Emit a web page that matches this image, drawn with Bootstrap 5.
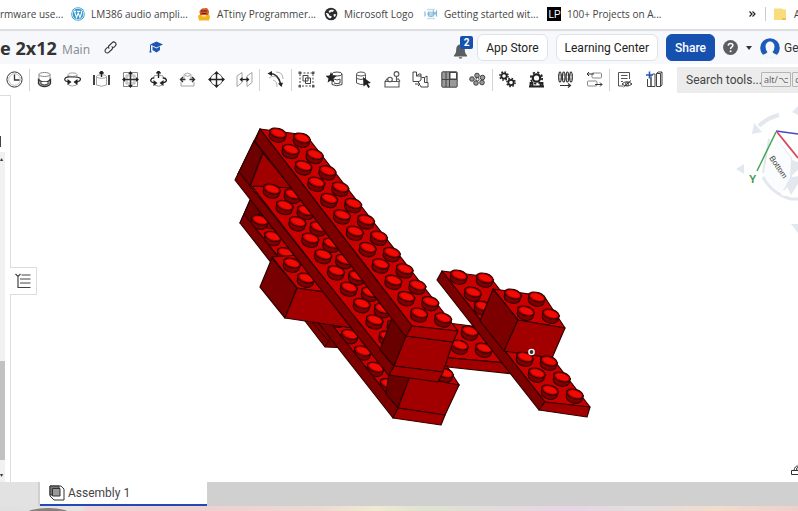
<!DOCTYPE html>
<html lang="en">
<head>
<meta charset="utf-8">
<meta name="viewport" content="width=device-width, initial-scale=1">
<title>Plate 2x12 Assembly</title>
<link rel="stylesheet" href="https://cdn.jsdelivr.net/npm/bootstrap@5.3.0/dist/css/bootstrap.min.css">
<style>
body{font-family:Roboto,"Noto Sans",sans-serif;font-size:12px;color:#333;background:#fff}
a{color:inherit;text-decoration:none}
.bookmarks{height:31px;border-bottom:2px solid #dcdfe2;font-family:"Open Sans","Noto Sans",sans-serif;font-size:10px;color:#444;padding-bottom:1px}
.bookmarks a{gap:6px}
.bm-grid{display:grid;grid-template-columns:71px 126px 127px 100px 123px 1fr}
.bm-grid svg,.bm-more svg{width:14px;height:14px;flex:none}
.bm-more{width:49px;gap:8px}
.bm-more>*{flex:none}
.bm-more svg.chev{width:8px}
.bm-more .bar{width:1px;height:14px;background:#ccc}
.docbar{height:33px;background:#f6f8fb}
.doc-title{font-family:"Noto Sans",sans-serif;font-size:18px;font-weight:700;line-height:24px;width:62px}
.doc-space{font-family:"Noto Sans",sans-serif;color:#8b8f94;font-size:12px;width:42px;padding-top:4px}
.docbar .btn{font-size:12px;line-height:16px;height:27px;color:#222;padding:4px 8px}
.docbar .btn-plain{background:#fff;border:1px solid #dfe3e8}
.docbar .btn-share{background:#1651b0;color:#fff;border-color:#1651b0;width:49px;padding:4px 0;font-weight:500}
.icon-btn{background:none;border:0;padding:0;color:#333;line-height:1;display:flex;align-items:center;justify-content:center}
.bell{width:24px;height:27px;margin-right:1px}
.bell .count{position:absolute;top:2px;right:3px;width:13px;height:13px;font-size:10px;line-height:13px;background:#1651b0;color:#fff;border-radius:2px;font-weight:700}
.user-zone{width:83px;padding-left:8px}
.toolbar{height:31px}
.tgroup{height:22px;border-right:1px solid #d4d4d4}
.tgroup .icon-btn{flex:1 1 0}
.tgroup svg{width:17px;height:17px}
.g1{width:30px}.g8{width:230px}.g1b{width:32px}.g7{width:201px}.g4{width:117px}.g2{width:59px;border:0}
.search{background:#ececec;height:26px;margin-left:8px;padding-left:9px}
.search>*{flex:none}
.search input{border:0;background:none;padding:0;width:75px;font-size:12px;color:#444;outline:0}
.search input::placeholder{color:#444;opacity:1}
.search kbd{font-family:"Noto Sans","DejaVu Sans",sans-serif;font-size:9px;line-height:13px;background:none;color:#666;border:1px solid #b5b5b5;border-radius:1px;padding:0 2px;margin-right:1px}
.side{width:11px;border-right:1px solid #dcdcdc;border-top:1px solid #dcdcdc}
.side .track{width:5px;background:#f1f1f1;margin-top:56px;font-size:6px;line-height:14px}
.side .thumb{height:99px;background:#c1c1c1;margin-bottom:8px}
.side .grip{position:absolute;left:0;top:40px;width:1px;height:11px;background:#444}
.tree-btn{position:absolute;left:-1px;top:172px;width:27px;height:28px;border:1px solid #dcdcdc;border-left:0;background:#fff}
.model{position:absolute;left:-11px;top:0;width:798px;height:388px}
.cube{position:absolute;right:0;top:0;width:78px;height:146px}
.corner{position:absolute;right:0;bottom:6px;width:8px;height:12px}
.tabs{height:24px;background:#d0d0d0}
.tabs .lead-in{width:40px;background:#e2e2e2;border-right:2px solid #d0d0d0}
.tabs .tab-on{width:167px;background:#fff;border-bottom:2px solid #2448b4;padding-left:9px;gap:3px;font-size:12px;color:#444}
.strip{height:5px;background:linear-gradient(90deg,#dfe0df 0,#e4e4e2 10%,#f0d3d6 11%,#efcfd0 25%,#efd9d2 40%,#f0ead0 47%,#dfe3cf 53%,#e8d4e6 71%,#e3dedd 80%,#f3dccb 90%,#efcfcc 100%)}
</style>
</head>
<body>
<div class="d-flex flex-column vh-100 overflow-hidden text-nowrap">

<nav class="bookmarks d-flex align-items-center overflow-hidden flex-shrink-0" aria-label="Bookmarks">
  <div class="bm-grid flex-grow-1">
    <a href="#">rmware use...</a>
    <a href="#" class="d-flex align-items-center"><svg viewBox="0 0 14 14"><circle cx="7" cy="7" r="6.800" fill="#3499cd"/><circle cx="7" cy="7" r="5.700" fill="none" stroke="#fff" stroke-width=".7"/><path d="M2.700 4.400h2.500M6 4.400h3M3.400 4.500l2.200 6 1.600-4.600L8.900 10.500l1.700-4.500q.2-1.200-.7-2" fill="none" stroke="#fff" stroke-width="1.100"/></svg>LM386 audio ampli...</a>
    <a href="#" class="d-flex align-items-center"><svg viewBox="0 0 14 14"><path d="M1 9q1-2 3-1h6q3-1 3 2l-1 3.500H2z" fill="#f2b51e"/><path d="M3 8L2.500 4 5 1.500l5-.5 2 3-.5 4z" fill="#d8572a"/><path d="M4 4h6M4.500 6.500h5" stroke="#542b1a" stroke-width="1.200"/><path d="M5 8h4v1.500H5z" fill="#ffe6a5"/></svg>ATtiny Programmer...</a>
    <a href="#" class="d-flex align-items-center"><svg viewBox="0 0 14 14"><circle cx="7" cy="7" r="6.300" fill="#2b2d2f"/><path d="M2 6q2.500-.5 3 1.500T7.500 9Q8 11 6 11.500 3 10.500 2 6zM6 3q3-.8 4 .5L8.500 5 7 4.500 6 6 4.500 4.500zM9.500 7.500q1.500-1 2.500 0-.3 2-2 2.500z" fill="#fff"/></svg>Microsoft Logo</a>
    <a href="#" class="d-flex align-items-center"><svg viewBox="0 0 14 14"><path d="M3 2.500h8M3 11.500h8" stroke="#c8dde9" stroke-width="1.500"/><path d="M1 4.500v5M3 7h1.500V4.500v5M6 4.500v5h2v-5M9.500 9.500v-5L11 7l1.500-2.500v5" fill="none" stroke="#83b9d8" stroke-width="1.200"/></svg>Getting started wit...</a>
    <a href="#" class="d-flex align-items-center"><svg viewBox="0 0 14 14"><rect width="14" height="14" fill="#000"/><text x="1.500" y="11" font-size="10" font-family="Liberation Sans" fill="#fff">LP</text></svg>100+ Projects on A...</a>
  </div>
  <div class="bm-more d-flex align-items-center flex-shrink-0">
    <a href="#" class="d-flex" aria-label="More"><svg class="chev" viewBox="0 0 8 14"><path d="M.5 4.500L3 7 .5 9.500M3.500 4.500L6 7 3.500 9.500" fill="none" stroke="#222" stroke-width="1.200"/></svg></a>
    <span class="bar"></span>
    <a href="#" class="d-flex align-items-center"><svg viewBox="0 0 14 14"><path d="M0 1.500h8l1 1h3V13H0z" fill="#f9dc7b"/><path d="M8 11h4v2H8z" fill="#efc14c"/></svg>A</a>
  </div>
</nav>

<header class="docbar d-flex align-items-center overflow-hidden flex-shrink-0">
  <h1 class="doc-title mb-0 flex-shrink-0">e 2x12</h1>
  <span class="doc-space">Main</span>
  <button class="icon-btn" aria-label="Link"><svg width="13" height="13" viewBox="0 0 13 13" fill="none" stroke="#333" stroke-width="1.100"><path d="M5.300 7.700C4 6.500 4.400 5.300 5.200 4.500L8 1.800c1-1 2.400-1 3.300-.1s.9 2.300 0 3.200L9.300 6.800M7.700 5.300c1.300 1.200.9 2.400.1 3.200L5 11.200c-1 1-2.400 1-3.300.1s-.9-2.300 0-3.200L3.700 6.200"/></svg></button>
  <button class="icon-btn ms-4 ps-2" aria-label="Education"><svg width="14" height="13" viewBox="0 0 14 13" fill="#1f55b5"><path d="M7.500.5L14 3.500 7.500 6.500 1 3.500zM3.500 5.500l4 2 3.500-2v3.500l-3.500 2.500-4-2.500zM1 4h1v5l.6 2.500H.3L1 9z"/></svg></button>
  <div class="flex-grow-1"></div>
  <button class="icon-btn bell position-relative" aria-label="Notifications, 2 new"><svg class="mt-2 me-2" width="15" height="17" viewBox="0 0 15 16" fill="#5a5d61"><path d="M7.500 1c3 0 4.300 2 4.300 5 0 3 .7 4.300 2.200 5.800V13H1v-1.200C2.500 10.300 3.200 9 3.200 6c0-3 1.300-5 4.300-5zM5.500 13.800h4q-2 3-4 0z"/></svg><span class="count">2</span></button>
  <button class="btn btn-plain">App Store</button>
  <button class="btn btn-plain ms-2">Learning Center</button>
  <button class="btn btn-share ms-2">Share</button>
  <div class="user-zone d-flex align-items-center flex-shrink-0">
    <button class="icon-btn" aria-label="Help"><svg width="15" height="15" viewBox="0 0 15 15"><circle cx="7.500" cy="7.500" r="7.400" fill="#5c5e61"/><path d="M5.200 5.600Q5.400 3.500 7.600 3.500T9.900 5.500C9.900 7 7.600 7 7.600 9" fill="none" stroke="#fff" stroke-width="1.500"/><circle cx="7.600" cy="11.200" r="1" fill="#fff"/></svg><svg class="ms-2" width="6" height="4" viewBox="0 0 6 4"><path d="M0 0h6L3 4z" fill="#333"/></svg></button>
    <a href="#" class="d-flex align-items-center ms-2"><svg class="me-1" width="20" height="20" viewBox="0 0 20 20"><circle cx="10" cy="10" r="9.800" fill="#1d5bb8"/><path d="M5.500 8.500a4.500 5 0 0 1 9 0q0 3.500-2 5.500l1.500 1.500 3.500 1.500Q15 20 10 20t-7.500-3L6 15.500 7.500 14q-2-2-2-5.500z" fill="#f6f8fb"/></svg>Ge</a>
  </div>
</header>

<div class="toolbar d-flex align-items-center overflow-hidden flex-shrink-0" role="toolbar" aria-label="Assembly tools">
  <div class="tgroup g1 d-flex flex-shrink-0"><button class="icon-btn" aria-label="History"><svg viewBox="0 0 17 17" fill="none" stroke="#333" stroke-width="1"><circle cx="8.500" cy="8.500" r="7.600"/><circle cx="8.500" cy="8.500" r="5.800" stroke="#999" stroke-width=".6"/><path d="M8.500 3.500v5.500h5" stroke-width="1.300"/></svg></button></div>
  <div class="tgroup g8 d-flex flex-shrink-0">
    <button class="icon-btn" aria-label="Fastened mate"><svg viewBox="0 0 17 17" fill="none" stroke="#777" stroke-width=".9"><path d="M3 3.500v6M14 3.500v6"/><ellipse cx="8.500" cy="3.500" rx="5.500" ry="2" fill="#fff"/><path d="M2.500 8.500v4q1.500 3 6 3t6-3v-4l-2 1.500q-4 2-8 0z" fill="#aaa" stroke="#333" stroke-width="1.300"/><path d="M5 11v2q3.500 1.800 7 0v-2" fill="#fff" stroke="#333"/></svg></button>
    <button class="icon-btn" aria-label="Revolute mate"><svg viewBox="0 0 17 17" fill="none" stroke="#999" stroke-width=".9"><path d="M4 4v3M13 4v3M4.500 12v2q4 2 8 0v-2"/><ellipse cx="8.500" cy="3.700" rx="4.500" ry="1.800"/><path d="M6 11Q0 10.500.8 8T6 6h5q6 .3 5.400 2.500T11 11" stroke="#333" stroke-width="1.200"/><path d="M3.500 8L7.500 11l-4 3zM13.500 8l-4 3 4 3z" fill="#222" stroke="none"/></svg></button>
    <button class="icon-btn" aria-label="Slider mate"><svg viewBox="0 0 17 17" fill="none" stroke="#999" stroke-width=".9"><path d="M3.500 5.500v8.500q5 2.500 10 0V5.500"/><ellipse cx="8.500" cy="5.500" rx="5" ry="1.800"/><path d="M1 4v10M16 4v10" stroke="#222" stroke-width="1.700"/><path d="M8.500 0v6M6.500 2.500L8.500 0l2 2.500" stroke="#222" stroke-width="1.400"/></svg></button>
    <button class="icon-btn" aria-label="Planar mate"><svg viewBox="0 0 17 17" fill="none" stroke="#333" stroke-width=".9"><path d="M1.500 1.500h14v14h-14z" stroke="#777"/><path d="M3 5h11M3 12h11M5 3v11M12 3v11" stroke="#aaa"/><path d="M1 8.500h15M8.500 1v15" stroke-width="1.500"/><path d="M8.500 0L11 3.200H6zM8.500 17L6 13.800h5zM0 8.500L3.200 6v5zM17 8.500L13.800 11V6z" fill="#222" stroke="none"/></svg></button>
    <button class="icon-btn" aria-label="Cylindrical mate"><svg viewBox="0 0 17 17" fill="none" stroke="#888" stroke-width=".9"><path d="M4 5v3M13 5v3M4.500 13v1q4 2.500 8 0v-1M4 5q4.500-2 9 0"/><path d="M6 12Q0 11.500.8 9T4 7M11 12q6-.8 5.400-3T13 7" stroke="#222" stroke-width="1.300"/><path d="M3.500 9L7.500 12l-4 3zM13.500 9l-4 3 4 3z" fill="#222" stroke="none"/><path d="M8.500 0v7M6.500 2.500L8.500 0l2 2.500" stroke="#222" stroke-width="1.400"/></svg></button>
    <button class="icon-btn" aria-label="Pin slot mate"><svg viewBox="0 0 17 17" fill="none" stroke="#999" stroke-width=".9"><path d="M5 8V3.500Q8.500.5 12 3.500V8M2 11v4h13v-4"/><path d="M6 4.500q2.500 1.500 5 0"/><path d="M1.500 8.500h5M10.500 8.500h5M4 6L1.500 8.500 4 11M13 6l2.500 2.500L13 11" stroke="#333" stroke-width="1.400"/></svg></button>
    <button class="icon-btn" aria-label="Ball mate"><svg viewBox="0 0 17 17" fill="none" stroke="#444" stroke-width=".9"><circle cx="8.500" cy="8.500" r="6"/><path d="M1 8.500h15M8.500 1v15" stroke="#222" stroke-width="1.400"/><path d="M8.500 0l2.500 3h-5zM8.500 17l-2.500-3h5zM0 8.500l3-2.500v5zM17 8.500l-3 2.500v-5z" fill="#222" stroke="none"/></svg></button>
    <button class="icon-btn" aria-label="Parallel mate"><svg viewBox="0 0 17 17" fill="none" stroke="#999" stroke-width=".9"><path d="M1 5l5-3.500v10L1 15.500zM11 5l5-3.500v10l-5 4z"/><path d="M4.500 8.500h8" stroke="#222" stroke-width="1.300"/><path d="M3.500 8.500l3-2.500v5zM13.500 8.500l-3 2.500v-5z" fill="#222" stroke="none"/></svg></button>
  </div>
  <div class="tgroup g1b d-flex flex-shrink-0"><button class="icon-btn" aria-label="Tangent mate"><svg viewBox="0 0 17 17" fill="none" stroke="#aaa" stroke-width=".9"><path d="M2 7q6-4 9 1t3 7M6 9q4 1 4 7M9 1q7 0 7 7"/><path d="M3 2.500q8 0 10.500 10" stroke="#222" stroke-width="1.400"/><path d="M.5 2.500L5 0v5zM14.500 16l-3.500-3.500 5-1z" fill="#222" stroke="none"/></svg></button></div>
  <div class="tgroup g7 d-flex flex-shrink-0">
    <button class="icon-btn" aria-label="Group"><svg viewBox="0 0 17 17" fill="none" stroke="#444"><path d="M2 2h13v13H2z" stroke-dasharray="2 1.500"/><path d="M.5.500h2.500v2.500H.5zM14 .5h2.500v2.500H14zM.5 14h2.500v2.500H.5zM14 14h2.500v2.500H14z" fill="#555" stroke="none"/><path d="M5 4.500h5v5.500H5zM7.500 7h5v5.500h-5z" fill="#fff"/></svg></button>
    <button class="icon-btn" aria-label="Mate connector"><svg viewBox="0 0 17 17" fill="none" stroke="#444" stroke-width="1"><path d="M6 3v10.500q4.500 2.500 10 0V3"/><ellipse cx="11" cy="3" rx="5" ry="2" fill="#fff"/><path d="M8 8q3 2 6 0v4q-3 1.500-6 0"/><path d="M5 1l1.500 3.500 4 .4-3 2.500.9 4L5 9.400 1.600 11.400l.9-4L-.5 4.900l4-.4z" fill="#222" stroke="none"/></svg></button>
    <button class="icon-btn" aria-label="Select part"><svg viewBox="0 0 17 17" fill="none" stroke="#555" stroke-width="1"><path d="M1.500 3v9q4 2.500 9 1V3"/><ellipse cx="6" cy="3" rx="4.500" ry="2" fill="#fff"/><path d="M1.500 7.500q4.500 2 9 0"/><path d="M8 6l8 6-3.200.5L15 16l-1.700 1-2.100-3.500L8.500 15.500z" fill="#222" stroke="none"/></svg></button>
    <button class="icon-btn" aria-label="Replicate"><svg viewBox="0 0 17 17" fill="none" stroke="#555" stroke-width="1.100"><path d="M1 10.500h14V16H1zM1 10.500L3 8h2M12 8h2.500l1.500 2.500"/><circle cx="6" cy="8.500" r="2.300" fill="#fff"/><circle cx="12.500" cy="3" r="2.400"/><path d="M12.500 5.500V11"/></svg></button>
    <button class="icon-btn" aria-label="Snap"><svg viewBox="0 0 17 17" fill="none" stroke="#444" stroke-width="1"><path d="M1 1h3.500v4H9v4L7 10.500H1zM9.500 6.500h3v5H16V16H9l-1-2"/><path d="M4.500 5L7 3h2v2M12.500 6.500L15 5v6.500"/><path d="M3 13h5M6 11l2 2-2 2"/></svg></button>
    <button class="icon-btn" aria-label="Pattern"><svg viewBox="0 0 17 17" stroke="#444" stroke-width="1"><rect x=".8" y=".8" width="15.400" height="15.400" rx="1" fill="#999"/><path d="M9 1.500h6.500V8H9z" fill="#fff"/><path d="M8.500 1v15M1 8.500h15M5 1v15" fill="none"/></svg></button>
    <button class="icon-btn" aria-label="Circular pattern"><svg viewBox="0 0 17 17" fill="#999" stroke="#333" stroke-width=".9"><circle cx="3" cy="8" r="2.300"/><circle cx="8" cy="4.500" r="2.300"/><circle cx="13.500" cy="6.500" r="2.300"/><circle cx="13" cy="11.500" r="2.300"/><circle cx="7" cy="12" r="2.300"/><circle cx="8.500" cy="8.300" r="1.600" fill="#fff"/></svg></button>
  </div>
  <div class="tgroup g4 d-flex flex-shrink-0">
    <button class="icon-btn" aria-label="Gear relation"><svg viewBox="0 0 17 17" fill="none" stroke="#222"><circle cx="5" cy="5" r="2.700" stroke-width="1.800"/><circle cx="5" cy="5" r="4.100" stroke-width="1.500" stroke-dasharray="1.600 1.620"/><circle cx="12" cy="11.500" r="2.700" stroke-width="1.800"/><circle cx="12" cy="11.500" r="4.100" stroke-width="1.500" stroke-dasharray="1.600 1.620"/></svg></button>
    <button class="icon-btn" aria-label="Rack and pinion"><svg viewBox="0 0 17 17" fill="none" stroke="#222"><circle cx="8.500" cy="7" r="3.700" stroke-width="2.200"/><circle cx="8.500" cy="7" r="5.700" stroke-width="1.800" stroke-dasharray="2.200 2.277"/><path d="M1 15.500h15M2.500 15.500v-3.500h2v3M14.500 15.500v-3.500h-2v3" stroke-width="1.800"/></svg></button>
    <button class="icon-btn" aria-label="Screw relation"><svg viewBox="0 0 17 17" fill="none" stroke="#333" stroke-width="1.200"><path d="M1 4h15M1 8h15" stroke="#888" stroke-width=".8"/><ellipse cx="3" cy="6" rx="1.300" ry="5"/><ellipse cx="6.700" cy="6" rx="1.300" ry="5"/><ellipse cx="10.400" cy="6" rx="1.300" ry="5"/><ellipse cx="14" cy="6" rx="1.300" ry="5"/><path d="M3 14.500h10M11 12.500l2.500 2-2.500 2"/></svg></button>
    <button class="icon-btn" aria-label="Linear relation"><svg viewBox="0 0 17 17" fill="none" stroke="#888" stroke-width="1"><rect x="6" y="2" width="9.500" height="5" rx="1"/><rect x="1.500" y="10" width="9.500" height="5" rx="1"/><path d="M1 3h7M3 1L1 3l2 2M9 13.500h7M14 11.500l2 2-2 2" stroke="#333"/></svg></button>
  </div>
  <div class="tgroup g2 d-flex flex-shrink-0">
    <button class="icon-btn" aria-label="Display states"><svg viewBox="0 0 17 17" fill="none" stroke="#555" stroke-width="1"><path d="M7 15H2.500V1.500h11V8M5 4.500h6.500M5 7.500h6.500M5 10.500h2"/><path d="M6 13q4.500-4.500 10 0-5 4-10 0zM7.500 16l7.500-6.500" stroke="#333"/><circle cx="11" cy="13" r="1.500"/></svg></button>
    <button class="icon-btn" aria-label="Insert"><svg viewBox="0 0 17 17" fill="none" stroke="#444" stroke-width="1"><path d="M1.500 8v7.500h3.500V6.500M5 15.500V4.500L6.500 3h2.500v12.500zM10.500 15.500V2.500L12 1h4v13l-1.500 1.500zM10.500 2.500h4v13M14.500 2.500L16 1"/><path d="M3.500 .5v7M0 4h7" stroke="#1e5bb8" stroke-width="1.600"/></svg></button>
  </div>
  <div class="search d-flex align-items-center flex-grow-1"><input type="text" placeholder="Search tools..." aria-label="Search tools"><kbd>alt/⌥</kbd><kbd>c</kbd></div>
</div>

<main class="d-flex flex-grow-1 overflow-hidden">
  <aside class="side d-flex flex-column position-relative flex-shrink-0"><span class="grip"></span>
    <div class="track d-flex flex-column flex-grow-1"><span>▴</span><div class="flex-grow-1"></div><div class="thumb"></div><span>▾</span></div>
  </aside>
  <section class="flex-grow-1 position-relative">
    <svg class="model" id="model" viewBox="0 95 798 388" role="img" aria-label="Red brick assembly"></svg>
    <button class="tree-btn icon-btn" aria-label="Show list"><svg width="16" height="16" viewBox="0 0 16 16" fill="none" stroke="#444" stroke-width="1.200"><path d="M.5 1l2.500 2.500L5.500 1M3 3v11.500h3M6.500 2h9M5 6h10.500M5 10h10.500M5 14.500h10.500"/></svg></button>
    <svg class="cube" viewBox="720 95 78 146" role="img" aria-label="View cube"><g fill="none" stroke="#e3e8ee" stroke-width="4"><path d="M779 115q-12 3-20 11"/><path d="M763 177q9 17 28 22h7" stroke-width="3"/><path d="M769 139l-6 34M778 142l13 16v22l-10 14" stroke-width="2"/></g><g fill="#e3e8ee"><path d="M754 123l-2 11 10-2zM736 169l8-5v10zM792 112l6-6v9zM791 224h7v9z"/><path d="M783 179l15-3v8l-7 11zM789 159l9 3v8l-9 8z"/></g><path d="M764 175l12-37 15 20-1 20-8 14q-12-3-18-17z" fill="#fbfcfd"/><ellipse cx="785" cy="193" rx="4" ry="3" fill="#fff"/><path d="M776 132L757 171" stroke="#45a657" stroke-width="1.500"/><path d="M776 131l22 3" stroke="#4949c8" stroke-width="1.500"/><path d="M777 132l21 26" stroke="#d64b5b" stroke-width="1.800"/><text x="749" y="183" font-family="Liberation Sans" font-weight="700" font-size="11" fill="#3d9c4c">Y</text><text transform="translate(769 158) rotate(56)" font-family="Liberation Sans" font-size="8" fill="#444">Bottom</text></svg>
    <svg class="corner" viewBox="0 0 8 12" fill="none" stroke="#333"><path d="M8 6.500H1.500V10.500H8M4 6.500Q4.500 2 8 2"/><circle cx="8" cy="5" r="1.500"/></svg>
  </section>
</main>

<footer class="flex-shrink-0">
  <div class="tabs d-flex">
    <div class="lead-in"></div>
    <a href="#" class="tab-on d-flex align-items-center"><svg width="16" height="16" viewBox="0 0 16 16" stroke="#333" stroke-width="1"><path d="M1 1h11l3 3v11H5l-4-4z" fill="#fff"/><path d="M1 1h9v9H1z" fill="#777"/><path d="M3.500 3.500h7.500v7.500H3.500z" fill="#999"/></svg>Assembly 1</a>
  </div>
  <div class="strip"><svg class="d-block" width="80" height="5" viewBox="0 0 80 5"><ellipse cx="48" cy="8" rx="22" ry="6" fill="#8a7f7f"/></svg></div>
</footer>
</div>
<script src="https://cdn.jsdelivr.net/npm/bootstrap@5.3.0/dist/js/bootstrap.bundle.min.js"></script>
<script>
const svg = document.getElementById('model');
const EDGE = '#300000', TOP = '#c80000', SIDE = '#7c0000', FRONT = '#a20000';
function add(tag, attrs) {
  const n = document.createElementNS('http://www.w3.org/2000/svg', tag);
  for (const k in attrs) n.setAttribute(k, attrs[k]);
  svg.appendChild(n);
}
function face(points, fill) {
  add('polygon', {points, fill, stroke: EDGE, 'stroke-width': 1.2, 'stroke-linejoin': 'round'});
}
function line(d) { add('path', {d, stroke: EDGE, 'stroke-width': 1, fill: 'none'}); }
/* raised cylinder: dark wall, rim, lit cap */
function stud(x, y) {
  add('path', {transform: `translate(${x} ${y}) rotate(17)`, d: 'M-8.500-1l.8 6c2 5 13 6 16 0l.2-6z', fill: '#7e0000', stroke: EDGE, 'stroke-width': 1.1});
  add('ellipse', {transform: `translate(${x} ${y}) rotate(17)`, rx: 8.5, ry: 4.6, fill: '#c00000', stroke: EDGE, 'stroke-width': 1.1});
  add('ellipse', {transform: `translate(${x + 0.3} ${y}) rotate(20)`, rx: 6.6, ry: 3, fill: '#f20a04'});
}
function studs(x, y, from, to) {
  for (let i = from; i <= to; i++) stud(x + 12.85 * i, y + 16.35 * i);
}

/* connecting plate */
face('440,322 488,328 516,364 440,357', TOP);
face('440,357 516,364 514,374 438,366', FRONT);
stud(470, 331); stud(460, 345); stud(484, 348);

/* long plate on the right */
face('442,271 490,277 590,407 545,402', TOP);
face('442,271 545,402 539,410 437,280', SIDE);
face('545,402 590,407 587,417 539,410', FRONT);
stud(485, 278); stud(459, 275); stud(473, 292); stud(483, 306);
/* brick on it */
face('493,289 544,296 565,328 518,320', TOP);
face('493,289 518,320 504,351 480,321', SIDE);
face('518,320 565,328 552,358 504,351', FRONT);
stud(537, 297); stud(513, 294); stud(551, 314); stud(526, 311);
stud(549, 361); stud(525, 357); stud(562, 377); stud(537, 373); stud(575, 394); stud(550, 390);

/* lowest plate */
face('305,321 340,322 350,348 325,347', SIDE);
line('M312 322L330 343M325 347L330 338L342 342');
face('250,200 300,195 459,385 398,408 244,214', TOP);
face('253,194 268,206 252,222 240,223', '#6c0000');
face('262,206 290,232 256,226', '#920000');
studs(260, 220, 0, 10);
studs(283, 222, 0, 9);
face('244,214 399,409 393,418 240,223', SIDE);
/* lower end brick */
face('392,372 447,366 459,385 410,378', TOP);
stud(445, 373);
face('390,366 410,376 398,408 386,394', '#6c0000');
face('410,376 459,385 445,415 398,408', FRONT);
face('398,408 445,415 441,425 393,418', FRONT);

/* brick on the left */
face('272,257 297,288 325,292 300,255', TOP);
stud(292, 263); stud(306, 278);
face('272,258 297,288 285,318 260,287', '#780000');
face('297,288 324,292 352,328 285,318', FRONT);

/* middle plate */
face('240,171 290,180 424,352 393,367', TOP);
face('260,129 288,150 300,190 238,174', '#6d0000');
face('263,153 292,188 250,186', FRONT);
face('254,141 263,152 250,186 238,174', '#6d0000');
studs(293, 194, 0, 8);
studs(272, 189, 0, 9);
face('239,172 394,366 389,376 235,180', SIDE);

/* top plate and its end brick */
face('392,318 407,337 394,366 380,350', '#680000');
face('406,336 453,342 443,372 394,366', FRONT);
face('394,366 443,372 438,382 389,375', FRONT);
face('260,129 306,135 458,331 412,326', TOP);
studs(302, 138, 0, 11);
studs(278, 133, 0, 11);
face('260,129 412,326 406,337 255,141', SIDE);
face('412,326 458,331 453,342 406,336', '#aa0000');

/* pointer */
add('circle', {cx: 531.5, cy: 352, r: 2.6, fill: '#333', stroke: '#fff', 'stroke-width': 1.4});
</script>
</body>
</html>
